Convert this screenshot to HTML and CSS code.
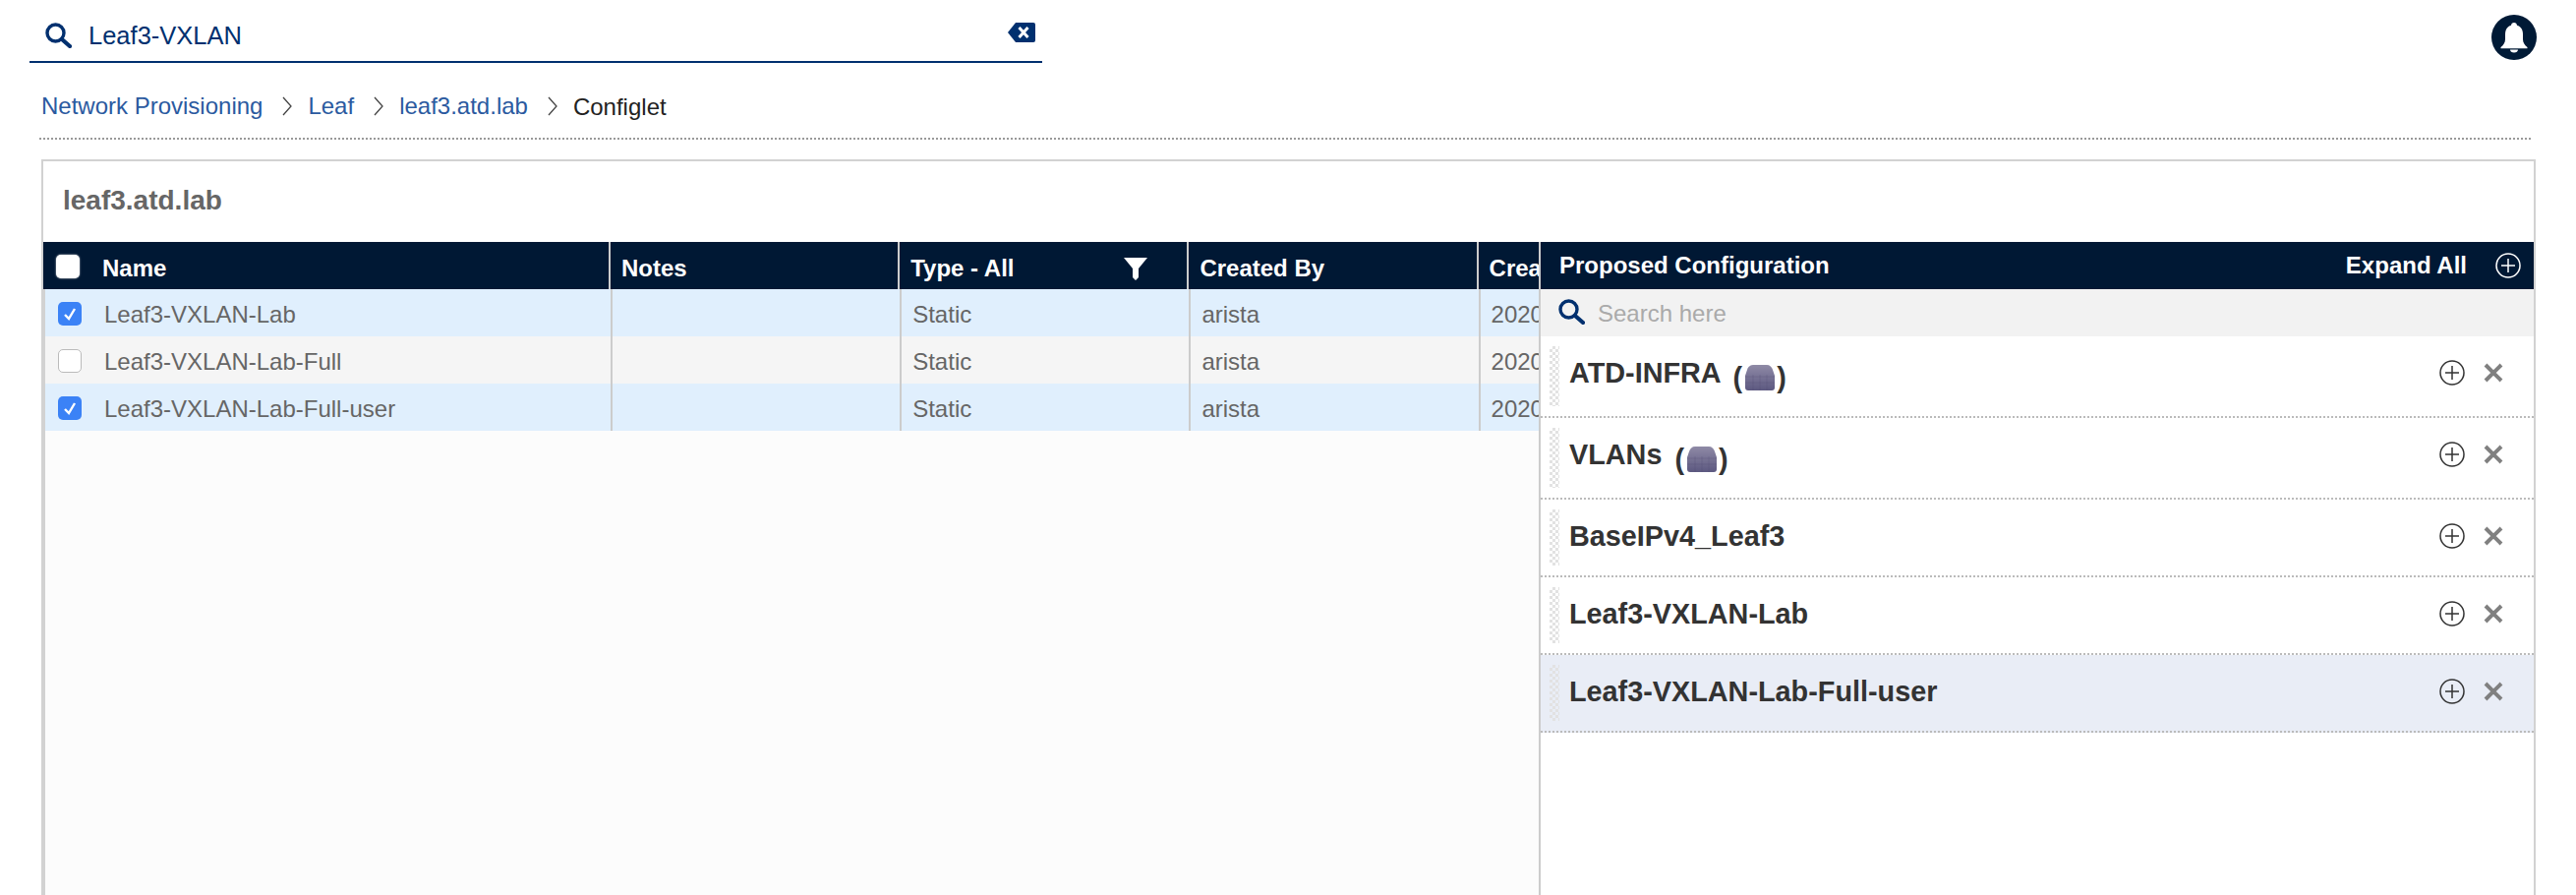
FILE: index.html
```html
<!DOCTYPE html>
<html lang="en">
<head>
    <meta charset="UTF-8">
    <title>Configlet</title>
    <link rel="stylesheet" href="styles.css">
</head>
<body>

    <div class="topbar">
        <div class="global-search">
            <svg class="search-icon" viewBox="0 0 27 26"><circle cx="10.5" cy="10.5" r="8.5" fill="none" stroke="#00306f" stroke-width="3.4"/><path d="M17 17l8 7" stroke="#00306f" stroke-width="4.2" stroke-linecap="round"/></svg>
            <span class="search-value">Leaf3-VXLAN</span>
            <svg class="clear-icon" viewBox="0 0 28 20"><path d="M8 0H26a2 2 0 0 1 2 2V18a2 2 0 0 1-2 2H8L0 10Z" fill="#00306f"/><path d="M11.5 5l9 10M20.5 5l-9 10" stroke="#fff" stroke-width="3"/></svg>
        </div>
        <div class="bell">
            <svg viewBox="0 0 46 46"><path d="M23 8c-1.700 0-3 1.200-3 2.800-4 1.200-6 4.600-6 9.200v5c0 3.500-2 6-4.500 8v1.200h27V33c-2.500-2-4.500-4.500-4.500-8v-5c0-4.600-2-8-6-9.200C26 9.200 24.700 8 23 8Z" fill="#fff"/><path d="M19 35.500h8c0 2-1.800 3-4 3s-4-1-4-3Z" fill="#fff"/></svg>
        </div>
    </div>

    <div class="breadcrumb">
        <a>Network Provisioning</a>
        <svg class="chevron" viewBox="0 0 10 20"><path d="M1 1l8 9-8 9" fill="none" stroke="#444" stroke-width="1.300"/></svg>
        <a>Leaf</a>
        <svg class="chevron" viewBox="0 0 10 20"><path d="M1 1l8 9-8 9" fill="none" stroke="#444" stroke-width="1.300"/></svg>
        <a>leaf3.atd.lab</a>
        <svg class="chevron" viewBox="0 0 10 20"><path d="M1 1l8 9-8 9" fill="none" stroke="#444" stroke-width="1.300"/></svg>
        <span class="current">Configlet</span>
    </div>
    <div class="line"></div>

    <div class="panel">
        <h1 class="panel-title">leaf3.atd.lab</h1>

        <div class="split">
            <div class="configlets">
                <div class="table-row table-head">
                    <div class="cell name-cell"><span class="check check-head"></span>Name</div>
                    <div class="cell">Notes</div>
                    <div class="cell type-cell">Type - All
                        <svg class="filter-icon" viewBox="0 0 24 23"><path d="M0 0H24L15 11V20L12 23 9 20V11Z" fill="#fff"/></svg>
                    </div>
                    <div class="cell">Created By</div>
                    <div class="cell">Created</div>
                </div>
                <div class="table-body">
                    <div class="table-row selected">
                        <div class="cell name-cell"><span class="check checked"><svg viewBox="0 0 24 24"><path d="M7 13l4 4 6-10" fill="none" stroke="#fff" stroke-width="2.400"/></svg></span>Leaf3-VXLAN-Lab</div>
                        <div class="cell"></div>
                        <div class="cell">Static</div>
                        <div class="cell">arista</div>
                        <div class="cell">2020</div>
                    </div>
                    <div class="table-row plain">
                        <div class="cell name-cell"><span class="check"></span>Leaf3-VXLAN-Lab-Full</div>
                        <div class="cell"></div>
                        <div class="cell">Static</div>
                        <div class="cell">arista</div>
                        <div class="cell">2020</div>
                    </div>
                    <div class="table-row selected">
                        <div class="cell name-cell"><span class="check checked"><svg viewBox="0 0 24 24"><path d="M7 13l4 4 6-10" fill="none" stroke="#fff" stroke-width="2.400"/></svg></span>Leaf3-VXLAN-Lab-Full-user</div>
                        <div class="cell"></div>
                        <div class="cell">Static</div>
                        <div class="cell">arista</div>
                        <div class="cell">2020</div>
                    </div>
                </div>
            </div>

            <div class="proposed">
                <div class="proposed-head">
                    <span class="proposed-title">Proposed Configuration</span>
                    <span class="expand-all">Expand All</span>
                    <svg class="plus-icon expand-plus" viewBox="0 0 26 26"><circle cx="13" cy="13" r="12" fill="none" stroke="#fff" stroke-width="1.500"/><path d="M13 6v14M6 13h14" stroke="#fff" stroke-width="1.500"/></svg>
                </div>
                <div class="proposed-search">
                    <svg class="small-search" viewBox="0 0 27 26"><circle cx="10.5" cy="10.5" r="8.500" fill="none" stroke="#00306f" stroke-width="3.400"/><path d="M17 17l8 7" stroke="#00306f" stroke-width="4.200" stroke-linecap="round"/></svg>
                    <span class="placeholder">Search here</span>
                </div>

                <div class="config-row">
                    <div class="grip"></div>
                    <div class="config-title">ATD-INFRA
                        <span class="device">(<svg class="device-icon" viewBox="0 0 32 28"><use href="#device"/></svg>)</span>
                    </div>
                    <svg class="plus-icon" viewBox="0 0 26 26"><use href="#plus"/></svg>
                    <svg class="remove-icon" viewBox="0 0 20 20"><use href="#remove"/></svg>
                </div>
                <div class="config-row">
                    <div class="grip"></div>
                    <div class="config-title">VLANs
                        <span class="device">(<svg class="device-icon" viewBox="0 0 32 28"><use href="#device"/></svg>)</span>
                    </div>
                    <svg class="plus-icon" viewBox="0 0 26 26"><use href="#plus"/></svg>
                    <svg class="remove-icon" viewBox="0 0 20 20"><use href="#remove"/></svg>
                </div>
                <div class="config-row">
                    <div class="grip"></div>
                    <div class="config-title">BaseIPv4_Leaf3</div>
                    <svg class="plus-icon" viewBox="0 0 26 26"><use href="#plus"/></svg>
                    <svg class="remove-icon" viewBox="0 0 20 20"><use href="#remove"/></svg>
                </div>
                <div class="config-row">
                    <div class="grip"></div>
                    <div class="config-title">Leaf3-VXLAN-Lab</div>
                    <svg class="plus-icon" viewBox="0 0 26 26"><use href="#plus"/></svg>
                    <svg class="remove-icon" viewBox="0 0 20 20"><use href="#remove"/></svg>
                </div>
                <div class="config-row active">
                    <div class="grip"></div>
                    <div class="config-title">Leaf3-VXLAN-Lab-Full-user</div>
                    <svg class="plus-icon" viewBox="0 0 26 26"><use href="#plus"/></svg>
                    <svg class="remove-icon" viewBox="0 0 20 20"><use href="#remove"/></svg>
                </div>
            </div>
        </div>
    </div>

    <!-- shared icons -->
    <svg class="icon-defs">
        <defs>
            <linearGradient id="deviceFill" x1="0" y1="0" x2="0" y2="1">
                <stop offset="0" stop-color="#8f8aa6"/>
                <stop offset="1" stop-color="#5c5880"/>
            </linearGradient>
            <symbol id="device" viewBox="0 0 32 28">
                <path d="M9 1H23C26 1 28 3 29 6L31 12V24C31 26 30 27 28 27H4C2 27 1 26 1 24V12L3 6C4 3 6 1 9 1Z" fill="url(#deviceFill)"/>
                <path d="M1 13H31M1 19H31M9 11V27M16 11V27M23 11V27" stroke="#4f4b72" stroke-width="0.500" stroke-opacity="0.500"/>
            </symbol>
            <symbol id="plus" viewBox="0 0 26 26">
                <circle cx="13" cy="13" r="12" fill="none" stroke="#333" stroke-width="1.500"/>
                <path d="M13 6v14M6 13h14" stroke="#333" stroke-width="1.500"/>
            </symbol>
            <symbol id="remove" viewBox="0 0 20 20">
                <path d="M2 2l16 16M18 2L2 18" stroke="#808080" stroke-width="4"/>
            </symbol>
        </defs>
    </svg>

</body>
</html>
```

FILE: styles.css
```css
* {
    margin: 0;
    padding: 0;
    box-sizing: border-box;
    font-family: "Liberation Sans", Arial, sans-serif;
}

body {
    height: 910px;
    overflow: hidden;
    background: #fff;
    font-size: 24px;
}

.icon-defs {
    width: 0;
    height: 0;
    display: block;
}

/* top bar */
.topbar {
    display: flex;
    justify-content: space-between;
    align-items: flex-start;
    padding: 15px 40px 0 30px;
    height: 65px;
}

.global-search {
    display: flex;
    align-items: center;
    width: 1030px;
    height: 50px;
    margin-top: -1px;
    padding: 0 7px 0 16px;
    border-bottom: 2px solid #00306f;
}

.search-icon {
    width: 27px;
    height: 26px;
    margin: -4px 17px 0 0;
}

.search-value {
    flex: 1;
    margin-top: -4px;
    font-size: 25.5px;
    color: #00306f;
}

.clear-icon {
    width: 28px;
    height: 20px;
    margin-top: -10px;
}

.bell {
    width: 46px;
    height: 46px;
    border-radius: 50%;
    background: #001a36;
}

.bell svg {
    display: block;
    width: 46px;
    height: 46px;
}

/* breadcrumb */
.breadcrumb {
    display: flex;
    align-items: center;
    height: 75px;
    padding: 10px 0 0 42px;
    color: #2b5aa0;
    white-space: nowrap;
}

.chevron {
    width: 10px;
    height: 20px;
    margin: 0 16px 0 20px;
}

.current {
    color: #222;
    margin-top: 3px;
}

.line {
    height: 2px;
    margin: 0 46px 0 40px;
    border-top: 2px dotted #999;
}

/* panel */
.panel {
    width: 2537px;
    height: 750px;
    margin: 20px 0 0 42px;
    border: 2px solid #d2d2d2;
    border-bottom: none;
}

.panel-title {
    height: 82px;
    padding: 23px 0 0 20px;
    font-size: 28px;
    line-height: 34px;
    font-weight: bold;
    color: #666;
}

.split {
    display: flex;
    height: 666px;
}

/* configlet table */
.configlets {
    width: 1521px;
    overflow: hidden;
    flex-shrink: 0;
}

.table-row {
    display: grid;
    grid-template-columns: 577px 294.2px 294.2px 294.2px 400px;
    height: 48px;
    width: 1860px;
}

.cell {
    display: flex;
    align-items: center;
    padding: 3px 0 0 11px;
    border-right: 2px solid #ccc;
    color: #666;
    white-space: nowrap;
}

.table-head {
    background: #001834;
}

.table-head .cell {
    padding-top: 5px;
    color: #fff;
    font-weight: bold;
}

.table-body {
    height: 618px;
    background: #fcfcfc;
    border-left: 2px solid #d2d2d2;
}

.selected {
    background: #e0effd;
}

.plain {
    background: #f5f5f5;
}

.name-cell {
    padding-left: 13px;
}

.type-cell {
    justify-content: space-between;
    padding-right: 40px;
}

.filter-icon {
    width: 24px;
    height: 23px;
    margin-top: 2px;
}

.check {
    display: block;
    width: 24px;
    height: 24px;
    margin: -2px 23px 0 0;
    border-radius: 5px;
    background: #fff;
    border: 1px solid #bbb;
    flex-shrink: 0;
}

.check svg {
    display: block;
}

.table-head .check-head {
    margin-top: -4px;
    border: none;
    box-shadow: 0 0 2px #ddd;
}

.checked {
    background: #3b82f6;
    border: none;
}

/* proposed configuration */
.proposed {
    flex: 1;
    border-left: 2px solid #ccc;
    background: #fff;
}

.proposed-head {
    display: flex;
    align-items: center;
    height: 48px;
    padding: 0 13px 0 19px;
    background: #001834;
    color: #fff;
    font-weight: bold;
}

.proposed-title {
    flex: 1;
    margin-top: -1px;
}

.expand-plus {
    margin-left: 29px;
}

.plus-icon {
    width: 26px;
    height: 26px;
    flex-shrink: 0;
}

.proposed-search {
    display: flex;
    align-items: center;
    height: 48px;
    padding: 2px 0 0 18px;
    background: #f2f2f2;
}

.small-search {
    width: 27px;
    height: 26px;
    margin: -5px 13px 0 0;
}

.placeholder {
    color: #aaa;
}

.config-row {
    display: flex;
    align-items: flex-start;
    padding: 10px 31px 10px 9px;
    border-bottom: 2px dotted #bbb;
}

.active {
    background: #e9edf6;
}

.grip {
    width: 10px;
    align-self: stretch;
    background-image: conic-gradient(#e2e2e2 25%, transparent 0 50%, #e2e2e2 0 75%, transparent 0);
    background-size: 6px 6px;
}

.config-title {
    flex: 1;
    height: 57px;
    padding: 10px 0 0 10px;
    font-size: 28.8px;
    line-height: 34px;
    font-weight: bold;
    color: #333;
    white-space: nowrap;
}

.device {
    display: inline-flex;
    align-items: center;
    margin-left: 5px;
    height: 28px;
    vertical-align: -5px;
    font-size: 28.8px;
}

.device-icon {
    width: 32px;
    height: 28px;
    margin: 0 1px 0 2px;
}

.config-row:nth-of-type(3) .config-title,
.config-row:nth-of-type(4) .config-title {
    height: 61px;
}

.config-row .plus-icon {
    margin: 14px 0 0 0;
}

.remove-icon {
    width: 20px;
    height: 20px;
    margin: 17px 0 0 19px;
    flex-shrink: 0;
}
```
